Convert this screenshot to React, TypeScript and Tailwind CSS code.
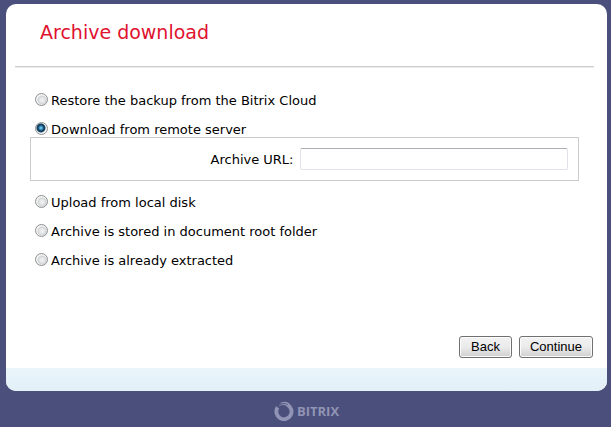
import { useState } from 'react';

const sources = [
  { id: 'cloud', label: 'Restore the backup from the Bitrix Cloud' },
  { id: 'remote', label: 'Download from remote server' },
  { id: 'local', label: 'Upload from local disk' },
  { id: 'root', label: 'Archive is stored in document root folder' },
  { id: 'extracted', label: 'Archive is already extracted' }
];

const radioClass =
  'size-[13px] shrink-0 appearance-none rounded-full border border-[#8e8f8f] bg-[radial-gradient(circle_at_55%_55%,#f4f4f4_0,#e0e2e4_3px,#ced1d4_4px,#f4f4f4_5px)] checked:bg-[radial-gradient(circle_at_45%_45%,#8ad8f6_0,#2a80b4_2px,#0f3a5a_3px,#174260_4px,#f4f4f4_5px)]';

const buttonClass =
  "h-[22px] min-w-[53px] rounded-[3px] border border-[#707070] bg-linear-to-b from-[#f2f2f2] from-0% via-[#ebebeb] via-50% to-[#cfcfcf] px-[10px] font-['Liberation_Sans',Arial,sans-serif] text-[13px] leading-5 text-black shadow-[inset_0_0_0_1px_#fcfcfc]";

function Logo() {
  return (
    <div className="flex items-center gap-[3px] text-[#9194b4]">
      <svg viewBox="0 0 20 20" className="size-5" fill="none" stroke="currentColor" aria-hidden="true">
        <path d="M3.600 6.400A7.600 7.600 0 1 0 13.400 3.800" strokeWidth="3.800" />
        <path d="M3.200 6.600C5.400 3.800 9.600 3 13 5.200L14.600 2.600C11.200 1 6.600 1.800 3.200 6.600z" fill="currentColor" stroke="none" />
        <path d="M5.400 2.600C8.200.2 12.600-.2 15.600 2.800L14 4.200C11.600 2 8.600 1.600 5.400 2.600z" fill="currentColor" stroke="none" />
        <path d="M4 5.200C7.200 2.200 10.800 2 13.600 3.600" stroke="#4b4f7c" strokeWidth=".8" />
      </svg>
      <span className="font-['Open_Sans',sans-serif] text-[13px] leading-5 font-bold">BITRIX</span>
    </div>
  );
}

export default function App() {
  const [source, setSource] = useState('remote');
  const [url, setUrl] = useState('');

  return (
    <div className="flex min-h-screen flex-col bg-[#4b4f7c] pt-1 pr-1 pl-[6px] font-['DejaVu_Sans',Verdana,sans-serif] text-[13px] text-black">
      <form
        className="flex flex-1 flex-col overflow-hidden rounded-[10px] bg-white"
        onSubmit={(e) => e.preventDefault()}
      >
        <h1 className="px-[34px] pt-4 text-[19px] leading-6 text-[#e0122f]">Archive download</h1>
        <hr className="mt-[22px] mr-[13px] ml-[9px] border-t border-b border-t-[#cecece] border-b-[#ececec]" />

        <div className="mt-[25px] mr-7 ml-6 flex flex-col">
          {sources.map((item) => (
            <div key={item.id} className="mb-[14px]">
              <label className="ml-[5px] flex items-start gap-[3px] leading-[15px]">
                <input
                  type="radio"
                  name="source"
                  value={item.id}
                  checked={source === item.id}
                  onChange={() => setSource(item.id)}
                  className={radioClass}
                />
                {item.label}
              </label>
              {item.id === 'remote' && source === 'remote' && (
                <div className="flex items-center border border-[#cccccc] py-[10px] pr-[10px]">
                  <label htmlFor="archive-url" className="flex-1 pr-[6px] text-right leading-[15px]">
                    Archive URL:
                  </label>
                  <input
                    id="archive-url"
                    type="text"
                    value={url}
                    onChange={(e) => setUrl(e.target.value)}
                    className="h-[22px] w-1/2 rounded-[2px] border border-[#e2e3ea] border-t-[#abadb3] bg-white px-1 outline-none"
                  />
                </div>
              )}
            </div>
          ))}
        </div>

        <div className="mt-auto flex justify-end gap-[7px] pr-[14px] pb-[10px]">
          <button type="button" className={buttonClass}>
            Back
          </button>
          <button type="submit" className={buttonClass}>
            Continue
          </button>
        </div>
        <div className="h-[23px] bg-linear-to-b from-[#eaf4fa] to-[#e2f0f8]" />
      </form>

      <footer className="flex h-9 items-center justify-center pt-1">
        <Logo />
      </footer>
    </div>
  );
}
